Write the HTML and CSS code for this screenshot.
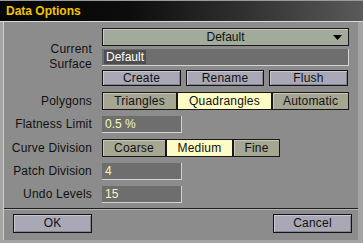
FILE: index.html
```html
<!DOCTYPE html>
<html lang="en">
<head>
    <meta charset="UTF-8">
    <title>Data Options</title>
    <link rel="stylesheet" href="styles.css">
</head>
<body>
    <div class="window">
        <div class="titlebar">Data Options</div>
        <div class="content">
            <div class="form">
                <div class="label">Current<br>Surface</div>
                <div class="surface">
                    <div class="dropdown">
                        <span>Default</span>
                        <svg class="arrow" width="9" height="5" viewBox="0 0 9 5"><polygon points="0,0 9,0 4.5,5" fill="#000"/></svg>
                    </div>
                    <div class="field wide"><span class="sel">Default</span></div>
                    <div class="actions">
                        <button class="btn">Create</button>
                        <button class="btn">Rename</button>
                        <button class="btn">Flush</button>
                    </div>
                </div>

                <div class="label">Polygons</div>
                <div class="seg">
                    <button class="opt tri">Triangles</button>
                    <button class="opt quad on">Quadrangles</button>
                    <button class="opt auto">Automatic</button>
                </div>

                <div class="label">Flatness Limit</div>
                <div class="field num">0.5 %</div>

                <div class="label">Curve Division</div>
                <div class="seg">
                    <button class="opt coarse">Coarse</button>
                    <button class="opt medium on">Medium</button>
                    <button class="opt fine">Fine</button>
                </div>

                <div class="label">Patch Division</div>
                <div class="field num">4</div>

                <div class="label">Undo Levels</div>
                <div class="field num">15</div>
            </div>
            <div class="footer">
                <button class="btn">OK</button>
                <button class="btn">Cancel</button>
            </div>
        </div>
    </div>
</body>
</html>
```
FILE: styles.css
```css
* {
    margin: 0;
    padding: 0;
    box-sizing: border-box;
}

body {
    font-family: 'Liberation Sans', Arial, sans-serif;
    font-size: 12px;
    color: #111;
    background: #8c8c8c;
}

.window {
    width: 363px;
    height: 243px;
    display: flex;
    flex-direction: column;
    background: #8c8c8c;
    border-left: 3px solid #a4a4a4;
    border-right: 5px solid #a4a4a4;
    border-bottom: 3px solid #a4a4a4;
}

.titlebar {
    height: 22px;
    margin: 0 -5px 0 -3px;
    padding: 3px 0 0 6px;
    background: linear-gradient(to right, #050505 0%, #0c0c0c 35%, #2e2e2e 65%, #5a5a5a 100%);
    border-top: 1px solid #9a9a9a;
    border-bottom: 1px solid #d8d8d8;
    color: #f4c400;
    font-weight: bold;
    font-size: 12px;
}

.content {
    flex: 1;
    display: flex;
    flex-direction: column;
    border-left: 1px solid #d0d0d0;
}

.form {
    display: grid;
    grid-template-columns: 88px 247px;
    column-gap: 10px;
    row-gap: 6px;
    padding-top: 6px;
}

.label {
    text-align: right;
    align-self: center;
    line-height: 15px;
    letter-spacing: 0.2px;
}

.surface {
    display: flex;
    flex-direction: column;
    gap: 3px;
}

.dropdown {
    height: 18px;
    display: flex;
    align-items: center;
    justify-content: center;
    position: relative;
    background: #a2aa9c;
    border: 1px solid #1a1a1a;
    box-shadow: inset 1px 1px 0 #c6ccc0;
}

.arrow {
    position: absolute;
    right: 6px;
    top: 6px;
}

.field {
    height: 17px;
    width: 80px;
    padding: 1px 0 0 3px;
    background: #6e6e6e;
    border-right: 1px solid #d4d4d4;
    border-bottom: 1px solid #d4d4d4;
    color: #f8f8b8;
    line-height: 14px;
}

.field.wide {
    width: 247px;
    padding-left: 2px;
}

.sel {
    display: inline-block;
    padding: 0 2px;
    background: #4e4e4e;
    color: #fff;
}

.actions {
    display: grid;
    grid-template-columns: 79px 78px 79px;
    column-gap: 5px;
    margin-top: 1px;
}

button {
    font-family: inherit;
    font-size: 12px;
    color: #111;
    letter-spacing: 0.2px;
}

.btn {
    height: 16px;
    background: #a8a8b6;
    border: 1px solid #141414;
    box-shadow: inset 1px 1px 0 #c8c8d4, inset -1px -1px 0 #84848e;
    line-height: 13px;
}

.seg {
    display: flex;
}

.opt {
    height: 18px;
    background: #a6a692;
    border: 1px solid #181818;
    box-shadow: inset 1px 1px 0 #c8c8b6;
    line-height: 15px;
}

.opt.on {
    background: #fcfcc4;
    box-shadow: none;
}

.tri { width: 75px; }
.quad { width: 95px; }
.auto { width: 77px; }
.coarse { width: 64px; }
.medium { width: 67px; }
.fine { width: 47px; }

.footer {
    margin-top: auto;
    height: 32px;
    display: flex;
    justify-content: space-between;
    padding: 5px 6px 0 9px;
    border-top: 1px solid #1e1e1e;
    box-shadow: inset 0 1px 0 #b4b4b4;
}

.footer .btn {
    width: 79px;
    height: 19px;
}
```
